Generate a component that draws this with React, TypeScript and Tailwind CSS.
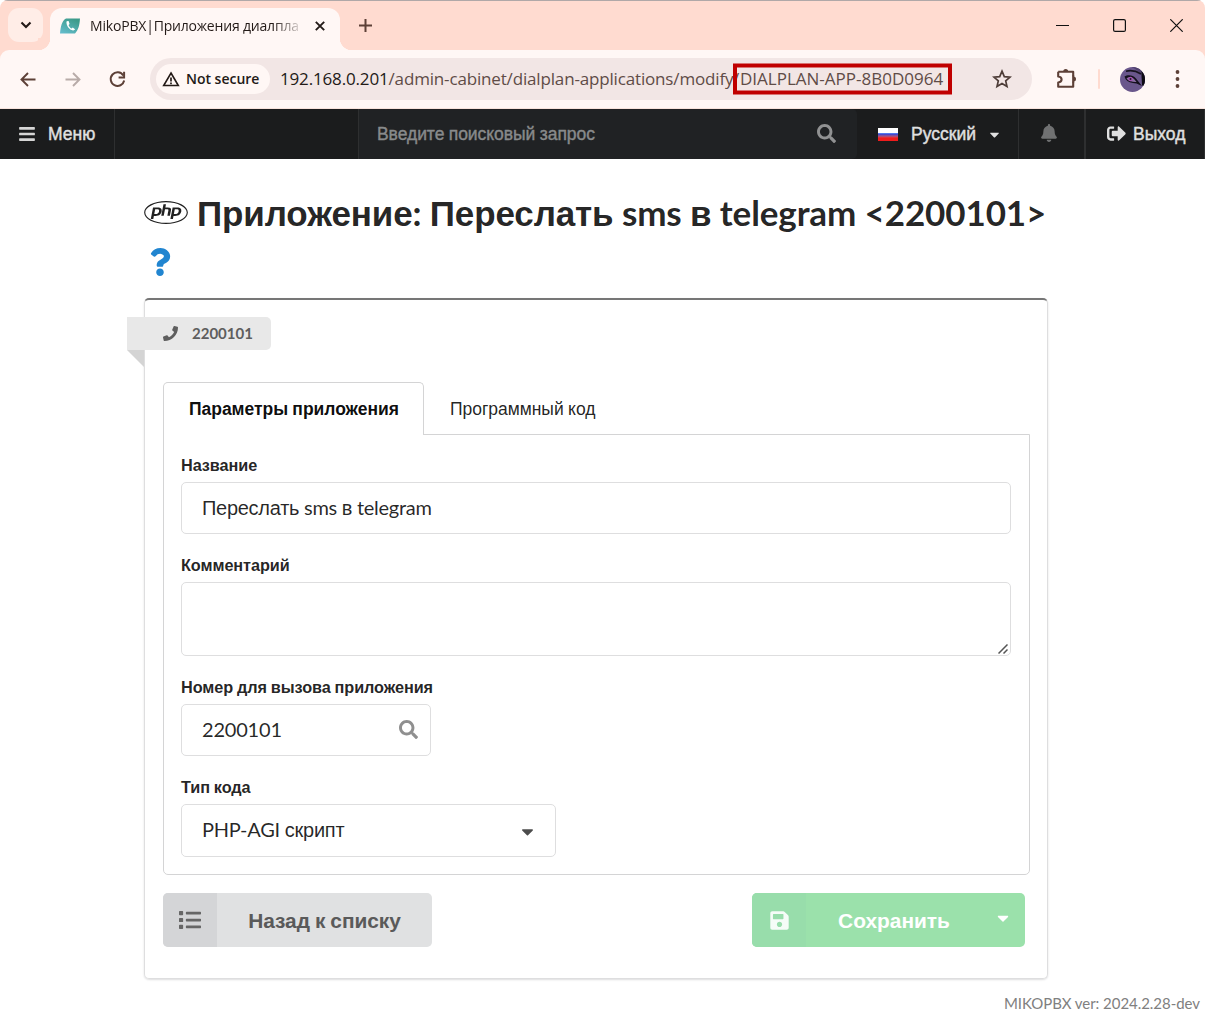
import React from "react";
import {
  FaBars,
  FaBell,
  FaCaretDown,
  FaList,
  FaPhone,
  FaPhp,
  FaQuestion,
  FaSave,
  FaSearch,
  FaSignOutAlt,
} from "react-icons/fa";

/** Latin runs use Lato, Cyrillic runs use an Arial-metric face. */
function T({ children }: { children: string }) {
  return (
    <>
      {children.split(/([\u0400-\u04ff]+)/).map((part, i) =>
        i % 2 ? (
          <span key={i} className="font-['Liberation_Sans',sans-serif]">
            {part}
          </span>
        ) : (
          part
        ),
      )}
    </>
  );
}

function TabStrip() {
  return (
    <div className="flex h-[50px] items-start border-t border-[#b0a8a8] bg-[#ffdbd0]">
      <button className="mt-[7px] ml-2 flex h-[34px] w-[35px] items-center justify-center rounded-[11px] bg-[#ffede7]">
        <svg width="12" height="8" viewBox="0 0 12 8" fill="none" stroke="#231a17" strokeWidth="2.1">
          <path d="M1.5 1.5 6 6l4.500-4.500" />
        </svg>
      </button>
      <div className="relative mt-[7px] ml-[7px] flex h-[42px] w-[290px] items-center rounded-t-[12px] bg-[#fff7f5] pb-[7px] pl-[10px]">
        <span className="absolute bottom-0 -left-3 size-3 bg-[radial-gradient(circle_at_0_0,#ffdbd0_12px,#fff7f5_12.500px)]" />
        <span className="absolute -right-3 bottom-0 size-3 bg-[radial-gradient(circle_at_100%_0,#ffdbd0_12px,#fff7f5_12.500px)]" />
        <svg width="20" height="16" viewBox="0 0 20 16">
          <defs>
            <linearGradient id="fav" x1="0" y1="1" x2="0.6" y2="0">
              <stop offset="0" stopColor="#67bfd0" />
              <stop offset="1" stopColor="#3d9b8b" />
            </linearGradient>
          </defs>
          <path d="M6 .5h14c-.5 7-1.500 11-5 15H0C.8 9 1.500 3 6 .5Z" fill="url(#fav)" />
          <path d="M6.500 3.500c-.6 3.500 2.700 8.500 6.500 9 1 .1 1.800-.6 2-1.200l-2.200-1.700-1.300.8c-1.300-.6-2.600-2.200-2.900-3.500l1-1-1-2.800c-.8-.3-1.700-.1-2.100.4Z" fill="#fff" />
        </svg>
        <div className="ml-[10px] w-[210px] whitespace-nowrap bg-linear-to-r from-[#231a17] from-87% to-[#231a17]/15 bg-clip-text font-['Open_Sans',sans-serif] text-[14px] tracking-[-0.19px] text-transparent">
          MikoPBX|Приложения диалпла
        </div>
        <svg className="ml-[15px]" width="10" height="10" viewBox="0 0 10 10" stroke="#231a17" strokeWidth="1.900">
          <path d="m.8.8 8.400 8.400M9.200.8.8 9.200" />
        </svg>
      </div>
      <svg className="mt-[18px] ml-[19px]" width="13" height="13" viewBox="0 0 13 13" stroke="#5d4037" strokeWidth="2">
        <path d="M6.500 0v13M0 6.500h13" />
      </svg>
      <div className="mt-[18px] mr-[22px] ml-auto flex items-center gap-[44px]">
        <svg width="13" height="13" viewBox="0 0 13 13" stroke="#111">
          <path d="M0 6.500h13" />
        </svg>
        <svg width="13" height="13" viewBox="0 0 13 13" fill="none" stroke="#111" strokeWidth="1.200">
          <rect x=".6" y=".6" width="11.800" height="11.800" rx="1.500" />
        </svg>
        <svg width="13" height="13" viewBox="0 0 13 13" stroke="#111" strokeWidth="1.200">
          <path d="m.3.3 12.400 12.400M12.700.3.3 12.700" />
        </svg>
      </div>
    </div>
  );
}

function Toolbar() {
  return (
    <div className="bg-[#ffdbd0]">
      <div className="flex h-[59px] items-center rounded-t-[9px] border-b border-[#f8e3dc] bg-[#fff7f5]">
        <svg className="ml-5" width="16" height="15" viewBox="0 0 16 15" fill="none" stroke="#5d4037" strokeWidth="1.900">
          <path d="M15.500 7.500H1.500M8 1 1.500 7.500 8 14" />
        </svg>
        <svg className="ml-[29px]" width="16" height="15" viewBox="0 0 16 15" fill="none" stroke="#b8aba8" strokeWidth="1.900">
          <path d="M.5 7.500h14M8 1l6.500 6.500L8 14" />
        </svg>
        <svg className="ml-[28px]" width="17" height="17" viewBox="0 0 17 17" fill="none" stroke="#5d4037" strokeWidth="2">
          <path d="M14.300 4.500A6.800 6.800 0 1 0 15.200 9.500" />
          <path d="M15.100.8v5.700H9.600" />
        </svg>
        <div className="ml-[24px] flex h-[42px] w-[882px] items-center rounded-full bg-[#f2e6e5] pl-[6px]">
          <div className="flex h-[30px] w-[114px] items-center rounded-full bg-[#fff7f5] pl-[6px]">
            <svg width="18" height="16" viewBox="0 0 18 16" fill="none" stroke="#231a17" strokeWidth="1.600">
              <path d="M9 2 16.300 14.500H1.700Z" />
              <path d="M9 6.500v4M9 11.600v1.600" strokeWidth="1.700" />
            </svg>
            <span className="-mt-px ml-[6px] whitespace-nowrap font-['Open_Sans',sans-serif] text-[14px] font-semibold tracking-[-0.02px] text-[#231a17]">
              Not secure
            </span>
          </div>
          <div className="relative ml-[10px] flex items-center whitespace-nowrap font-['Open_Sans',sans-serif] text-[17px] text-[#5f4c47]">
            <span className="w-[453px] tracking-[-0.16px]">
              <span className="text-[#231a17]">192.168.0.201</span>/admin-cabinet/dialplan-applications/modify
            </span>
            <span className="w-[7px]">/</span>
            <span>DIALPLAN-APP-8B0D0964</span>
            <span className="absolute top-1/2 left-[453px] h-[31px] w-[219px] -translate-y-1/2 border-4 border-[#c00000]" />
          </div>
          <svg className="mr-[20px] ml-auto" width="20" height="20" viewBox="0 0 20 20" fill="none" stroke="#4e3d38" strokeWidth="1.700">
            <path d="m10 2.200 2.300 5.400 5.800.5-4.400 3.800 1.300 5.700-5-3-5 3 1.300-5.700L1.900 8.100l5.800-.5Z" />
          </svg>
        </div>
        <svg className="ml-[24px]" width="22" height="22" viewBox="0 0 22 22">
          <path d="M2.200 3.800h15v4.400M17.200 13.800v5h-15v-4.300c4.500-.5 4.500-5.500 0-6V3.800" fill="none" stroke="#5d4037" strokeWidth="2.100" strokeLinejoin="round" />
          <path d="M17.200 7.500v7" stroke="#5d4037" strokeWidth="2.100" />
          <path d="M7.200 3.500a2.500 2.500 0 0 1 5 0ZM17.500 8.500a2.500 2.500 0 0 1 0 5Z" fill="#5d4037" />
        </svg>
        <span className="ml-[20px] h-5 w-[2px] rounded-full bg-[#ffdbd0]" />
        <svg className="ml-[20px]" width="25" height="25" viewBox="0 0 25 25">
          <defs>
            <clipPath id="av">
              <circle cx="12.500" cy="12.500" r="12.500" />
            </clipPath>
          </defs>
          <g clipPath="url(#av)">
            <path d="M0 0h25v25H0Z" fill="#6a578c" />
            <path d="M12 0c3 2 7 4 9 7l1 9 3 2V0Z" fill="#50416e" />
            <path d="M21.500 4H25v17l-3-3Z" fill="#0d0a12" />
            <path d="M6 4.200c5-1.200 10-.4 15 2.800" fill="none" stroke="#17121f" strokeWidth="1.600" />
            <path d="M4.500 9.500c3-2 8.500-1.800 11.500 2l6 7.500-5.500-2.500c-5-.3-9-1.500-11-4.500Z" fill="#15101d" />
            <path d="M6.500 11.500c2-2 6-1.500 8 1l2 2.500c-4 .3-8.500-1-10-3.500Z" fill="#8b6ea4" />
            <circle cx="10.500" cy="12" r="2.200" fill="#a552b2" />
            <circle cx="10.500" cy="12" r="1" fill="#221528" />
          </g>
        </svg>
        <svg className="ml-[30px]" width="5" height="18" viewBox="0 0 5 18" fill="#5d4037">
          <circle cx="2.500" cy="2" r="1.900" />
          <circle cx="2.500" cy="9" r="1.900" />
          <circle cx="2.500" cy="16" r="1.900" />
        </svg>
      </div>
    </div>
  );
}

function AppNav() {
  return (
    <nav className="flex h-[50px] items-stretch bg-[#1b1c1d] text-[17.5px] text-[#e0e0e0] [-webkit-text-stroke:0.4px]">
      <div className="flex w-[115px] items-center border-r border-[#2e2f30] pl-[18px]">
        <FaBars className="size-[18px] text-[#d6d6d6]" />
        <span className="ml-[12px]">
          <T>Меню</T>
        </span>
      </div>
      <div className="w-[244px] border-r border-[#2e2f30]" />
      <div className="flex w-[498px] items-center rounded-r-[5px] bg-[#202224] pl-[18px] text-[#888a8b]">
        <span className="tracking-[-0.05px]">
          <T>Введите поисковый запрос</T>
        </span>
        <FaSearch className="-mt-px mr-[21px] ml-auto size-[19px] text-[#909192]" />
      </div>
      <div className="flex w-[162px] items-center border-r border-[#2e2f30] pl-[21px]">
        <span className="h-[13px] w-[20px] bg-linear-to-b from-white from-35% via-[#2233e0] via-45% to-[#ee1c1c] to-75%" />
        <span className="ml-[13px]">
          <T>Русский</T>
        </span>
        <FaCaretDown className="ml-[11px] size-[15px]" />
      </div>
      <div className="flex w-[67px] items-center justify-center border-r-2 border-[#2e2f30] pr-[5px] text-[#707172]">
        <FaBell className="-mt-[2px] size-[18px]" />
      </div>
      <div className="flex flex-1 items-center border-r border-[#2e2f30] pl-[21px]">
        <FaSignOutAlt className="-mt-[2px] size-[19px]" />
        <span className="ml-[7px]">
          <T>Выход</T>
        </span>
      </div>
    </nav>
  );
}

function Label({ children }: { children: string }) {
  return (
    <label className="block h-[34px] text-[16.25px] leading-[34px] font-bold tracking-[-0.07px]">
      <T>{children}</T>
    </label>
  );
}

const box = "flex items-center rounded-[5px] border border-[#dededf] pl-[20px] text-[20px] text-black/85";

export default function App() {
  return (
    <div className="flex h-[1016px] w-[1205px] flex-col overflow-hidden rounded-[8px] bg-white font-[Lato,'Liberation_Sans',sans-serif] text-[rgba(0,0,0,0.87)]">
      <TabStrip />
      <Toolbar />
      <AppNav />

      <main className="ml-[144px] w-[904px] pt-[29px]">
        <h1 className="h-[110px] text-[35px] leading-[48px] font-bold">
          <div className="flex items-center whitespace-nowrap">
            <FaPhp className="-mt-[1px] h-[35px] w-[44px]" />
            <span className="ml-[9px] tracking-[-0.12px]">
              <T>{"Приложение: Переслать sms в telegram <2200101>"}</T>
            </span>
          </div>
          <FaQuestion className="mt-[10px] ml-[2px] size-[28px] text-[#2185d0]" />
        </h1>

        <section className="relative h-[681px] rounded-[5px] border border-t-2 border-[#dededf] border-t-[#767676] px-[18px] pt-[82px] shadow-[0_1px_2px_0_rgba(34,36,38,0.15)]">
          <div className="absolute top-[17px] -left-[18px] flex h-[33px] w-[144px] items-center rounded-r-[5px] bg-[#e8e8e8] pl-[36px] text-[15px] font-bold text-[#5e5e5e]">
            <FaPhone className="size-[15px]" />
            <span className="ml-[14px]">2200101</span>
            <span className="absolute top-full left-0 size-[17px] bg-[#d4d4d4] [clip-path:polygon(0_0,100%_0,100%_100%)]" />
          </div>

          <div className="flex h-[52px] items-stretch text-[17.5px] leading-[52px]">
            <div className="relative z-10 h-[53px] w-[261px] rounded-t-[5px] border border-b-0 border-[#d4d4d5] bg-white pl-[25px] font-bold tracking-[-0.03px] text-black/95">
              <T>Параметры приложения</T>
            </div>
            <div className="pt-px pl-[26px] tracking-[-0.03px]">
              <T>Программный код</T>
            </div>
          </div>

          <div className="h-[441px] w-[867px] rounded-b-[5px] border border-[#d4d4d5] px-[17px] pt-[13px]">
            <Label>Название</Label>
            <div className={`${box} h-[52px] w-[830px] pb-[2px] tracking-[-0.28px]`}>
              <span>
                <T>Переслать sms в telegram</T>
              </span>
            </div>
            <div className="mt-[14px]">
              <Label>Комментарий</Label>
            </div>
            <div className="flex h-[74px] w-[830px] items-end justify-end rounded-[5px] border border-[#dededf] pr-[2px] pb-px">
              <svg width="10" height="10" viewBox="0 0 10 10" stroke="#555" strokeWidth="1.500">
                <path d="M.5 9.500 9.500.5M5.500 9.500l4-4" />
              </svg>
            </div>
            <div className="mt-[14px]">
              <Label>Номер для вызова приложения</Label>
            </div>
            <div className={`${box} h-[52px] w-[250px] pb-[2px] tracking-[-0.2px]`}>
              2200101
              <FaSearch className="mr-[12px] ml-auto size-[19px] text-[#8f8f8f]" />
            </div>
            <div className="mt-[14px]">
              <Label>Тип кода</Label>
            </div>
            <div className={`${box} h-[53px] w-[375px] pb-[2px] tracking-[-0.25px]`}>
              <span>
                <T>PHP-AGI скрипт</T>
              </span>
              <FaCaretDown className="mt-[4px] mr-[18px] ml-auto size-[19px] text-[#4c4c4c]" />
            </div>
          </div>

          <div className="mt-[18px] flex w-[862px] justify-between text-[20.9px] font-bold">
            <button className="flex h-[54px] w-[269px] overflow-hidden rounded-[5px] bg-[#e0e1e2] text-[#5a5a5a]">
              <span className="flex w-[54px] items-center justify-center bg-[#d4d5d7] text-[#666]">
                <FaList className="size-[22px]" />
              </span>
              <span className="flex-1 leading-[54px] tracking-[-0.05px]">
                <T>Назад к списку</T>
              </span>
            </button>
            <button className="flex h-[54px] w-[273px] overflow-hidden rounded-[5px] bg-[#9be1ab] text-white">
              <span className="flex w-[54px] items-center justify-center bg-[#98ddab] text-white/90">
                <FaSave className="size-[21px]" />
              </span>
              <span className="w-[176px] leading-[54px]">
                <T>Сохранить</T>
              </span>
              <FaCaretDown className="mt-[16px] ml-[12px] size-[18px]" />
            </button>
          </div>
        </section>
      </main>

      <footer className="mt-[13px] mr-[5px] text-right text-[15px] tracking-[-0.04px] text-[#808080]">
        MIKOPBX ver: 2024.2.28-dev
      </footer>
    </div>
  );
}
